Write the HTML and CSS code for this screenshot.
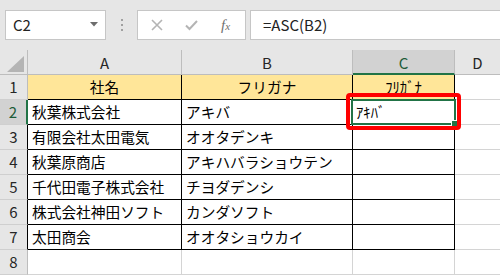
FILE: index.html
```html
<!DOCTYPE html>
<html lang="ja">
<head>
<meta charset="utf-8">
<title>ASC</title>
<link rel="stylesheet" href="styles.css">
</head>
<body>
<div class="toolbar">
  <div class="namebox"><span class="ref">C2</span><svg class="caret" width="8" height="5" viewBox="0 0 8 5"><path d="M0 0H8L4 4.5Z" fill="#6d6d6d"/></svg></div>
  <div class="grip"><i></i><i></i><i></i></div>
  <div class="fxbox">
    <svg class="ico" width="12" height="12" viewBox="0 0 12 12"><path d="M1 1L11 11M11 1L1 11" stroke="#b4b4b4" stroke-width="1.6" fill="none"/></svg>
    <svg class="ico ok" width="13" height="12" viewBox="0 0 13 12"><path d="M1 6.5L4.5 10L12 2" stroke="#b4b4b4" stroke-width="2" fill="none"/></svg>
    <span class="fx">f<span class="x">x</span></span>
  </div>
  <div class="formula">=ASC(B2)</div>
</div>
<div class="sheet">
  <div class="corner"><svg width="18" height="16" viewBox="0 0 18 16"><path d="M17 0V16H0Z" fill="#b4b4b4"/></svg></div>
  <div class="ch">A</div>
  <div class="ch">B</div>
  <div class="ch csel">C</div>
  <div class="ch last">D</div>

  <div class="rh">1</div>
  <div class="c t hd">社名</div>
  <div class="c t hd">フリガナ</div>
  <div class="c t hd">ﾌﾘｶﾞﾅ</div>
  <div class="c g last"></div>

  <div class="rh rsel">2</div>
  <div class="c t">秋葉株式会社</div>
  <div class="c t">アキバ</div>
  <div class="c t active">ｱｷﾊﾞ<span class="sel"><span class="handle"></span></span><span class="annot"></span></div>
  <div class="c g last"></div>

  <div class="rh rb">3</div>
  <div class="c t">有限会社太田電気</div>
  <div class="c t">オオタデンキ</div>
  <div class="c t"></div>
  <div class="c g last"></div>

  <div class="rh rb">4</div>
  <div class="c t">秋葉原商店</div>
  <div class="c t">アキハバラショウテン</div>
  <div class="c t"></div>
  <div class="c g last"></div>

  <div class="rh rb">5</div>
  <div class="c t">千代田電子株式会社</div>
  <div class="c t">チヨダデンシ</div>
  <div class="c t"></div>
  <div class="c g last"></div>

  <div class="rh rb">6</div>
  <div class="c t">株式会社神田ソフト</div>
  <div class="c t">カンダソフト</div>
  <div class="c t"></div>
  <div class="c g last"></div>

  <div class="rh rb">7</div>
  <div class="c t">太田商会</div>
  <div class="c t">オオタショウカイ</div>
  <div class="c t"></div>
  <div class="c g last"></div>

  <div class="rh">8</div>
  <div class="c g"></div>
  <div class="c g"></div>
  <div class="c g"></div>
  <div class="c g last"></div>
</div>
</body>
</html>
```
FILE: styles.css
```css
html, body {
  margin: 0;
  padding: 0;
  background: #ffffff;
  overflow: hidden;
}
body {
  width: 500px;
  height: 276px;
  font-family: "Noto Sans CJK JP", "Noto Sans", sans-serif;
  color: #000;
}
.toolbar {
  display: flex;
  height: 50px;
  box-sizing: border-box;
  padding: 10px 0 10px 5px;
  background: #e6e6e6;
}
.namebox {
  width: 101px;
  box-sizing: border-box;
  background: #fff;
  border: 1px solid #c6c6c6;
  display: flex;
  align-items: center;
  justify-content: space-between;
  padding: 0 7px 0 7px;
  font-size: 15px;
  color: #222;
}
.namebox .ref { line-height: 28px; }
.caret { margin-top: -2px; }
.grip {
  margin-left: 15px;
  width: 3px;
  display: flex;
  flex-direction: column;
  justify-content: center;
  gap: 3px;
}
.grip i {
  display: block;
  width: 2px;
  height: 2px;
  background: #a0a0a0;
}
.fxbox {
  margin-left: 13px;
  width: 109px;
  box-sizing: border-box;
  background: #fff;
  border: 1px solid #c6c6c6;
  display: flex;
  align-items: center;
  padding-left: 13px;
}
.ico { display: block; }
.ok { margin-left: 22px; }
.fx {
  margin-left: 23px;
  font-family: "Liberation Serif", serif;
  font-style: italic;
  font-size: 15px;
  color: #707070;
  line-height: 1;
}
.fx .x { font-size: 11px; margin-left: 0; }
.formula {
  margin-left: 4px;
  flex: 1;
  background: #fff;
  border: 1px solid #c6c6c6;
  border-right: none;
  font-size: 15px;
  color: #222;
  line-height: 28px;
  padding-left: 12px;
}
.sheet {
  display: grid;
  grid-template-columns: 28px 154px 171px 102px 45px;
  grid-auto-rows: 25px;
}
.corner {
  background: #e6e6e6;
  border-right: 1px solid #bdbdbd;
  border-bottom: 1px solid #bdbdbd;
  box-sizing: border-box;
  display: flex;
  align-items: flex-end;
  justify-content: flex-end;
  padding: 0 2px 2px 0;
}
.corner svg { display: block; }
.ch {
  background: #e6e6e6;
  border-right: 1px solid #bdbdbd;
  border-bottom: 1px solid #bdbdbd;
  box-sizing: border-box;
  text-align: center;
  font-size: 15px;
  line-height: 25px;
  color: #262626;
}
.ch.csel {
  background: #d2d2d2;
  border-bottom: 2px solid #217346;
  color: #1d5c38;
}
.ch.last { border-right: none; }
.rh {
  background: #e6e6e6;
  border-right: 1px solid #bdbdbd;
  border-bottom: 1px solid #cfcfcf;
  box-sizing: border-box;
  text-align: center;
  font-size: 15px;
  line-height: 24px;
  color: #262626;
}
.rh.rb { border-right-color: #000; }
.rh.rsel {
  background: #d2d2d2;
  border-right: 2px solid #217346;
  color: #1d5c38;
}
.c {
  box-sizing: border-box;
  border-right: 1px solid #d4d4d4;
  border-bottom: 1px solid #d4d4d4;
  font-size: 14.7px;
  line-height: 24px;
  padding: 0 4px;
  white-space: nowrap;
  overflow: hidden;
}
.c.t {
  border-right-color: #000;
  border-bottom-color: #000;
}
.c.last { border-right: none; }
.c.hd {
  background: #ffe699;
  text-align: center;
}
.c.active {
  position: relative;
  overflow: visible;
  padding-left: 3px;
}
.sel {
  position: absolute;
  left: -2px;
  right: -2px;
  top: -1px;
  bottom: -1px;
  border: 2px solid #217346;
  z-index: 2;
}
.handle {
  position: absolute;
  right: -4px;
  bottom: -4px;
  width: 5px;
  height: 5px;
  background: #217346;
  border: 1px solid #fff;
}
.annot {
  position: absolute;
  left: -7px;
  right: -7px;
  top: -7px;
  bottom: -6px;
  border: 4px solid #ff0000;
  border-radius: 4px;
  z-index: 3;
}
```
